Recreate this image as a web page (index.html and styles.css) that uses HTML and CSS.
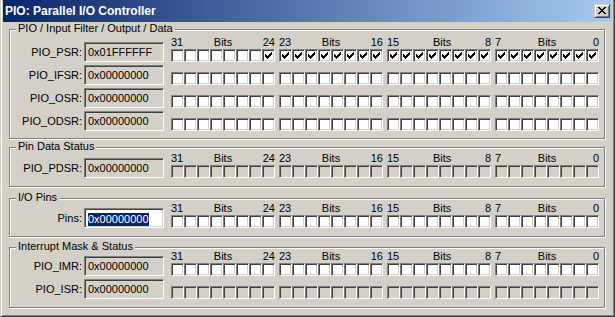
FILE: index.html
```html
<!DOCTYPE html>
<html>
<head>
<meta charset="utf-8">
<title>PIO: Parallel I/O Controller</title>
<link rel="stylesheet" href="styles.css">
</head>
<body>
<div class="window">
  <div class="titlebar">
    <span class="title">PIO: Parallel I/O Controller</span>
    <span class="close"><svg width="8" height="7" viewBox="0 0 8 7" shape-rendering="crispEdges"><path fill="#000" d="M0 0h2v1H0zM6 0h2v1H6zM1 1h2v1H1zM5 1h2v1H5zM2 2h4v1H2zM3 3h2v1H3zM2 4h4v1H2zM1 5h2v1H1zM5 5h2v1H5zM0 6h2v1H0zM6 6h2v1H6z"/></svg></span>
  </div>
  <div class="content">

    <fieldset class="group g1">
      <legend>PIO / Input Filter / Output / Data</legend>
      <div class="rows">
        <div class="row">
          <span class="label">PIO_PSR:</span><span class="field">0x01FFFFFF</span>
          <div class="bits">
            <div class="byte"><div class="hdr"><span>31</span><span>Bits</span><span>24</span></div>
              <div class="boxes"><span class="cb"></span><span class="cb"></span><span class="cb"></span><span class="cb"></span><span class="cb"></span><span class="cb"></span><span class="cb"></span><span class="cb on"></span></div></div>
            <div class="byte"><div class="hdr"><span>23</span><span>Bits</span><span>16</span></div>
              <div class="boxes"><span class="cb on"></span><span class="cb on"></span><span class="cb on"></span><span class="cb on"></span><span class="cb on"></span><span class="cb on"></span><span class="cb on"></span><span class="cb on"></span></div></div>
            <div class="byte"><div class="hdr"><span>15</span><span>Bits</span><span>8</span></div>
              <div class="boxes"><span class="cb on"></span><span class="cb on"></span><span class="cb on"></span><span class="cb on"></span><span class="cb on"></span><span class="cb on"></span><span class="cb on"></span><span class="cb on"></span></div></div>
            <div class="byte"><div class="hdr"><span>7</span><span>Bits</span><span>0</span></div>
              <div class="boxes"><span class="cb on"></span><span class="cb on"></span><span class="cb on"></span><span class="cb on"></span><span class="cb on"></span><span class="cb on"></span><span class="cb on"></span><span class="cb on"></span></div></div>
          </div>
        </div>
        <div class="row">
          <span class="label">PIO_IFSR:</span><span class="field">0x00000000</span>
          <div class="bits">
            <div class="boxes"><span class="cb"></span><span class="cb"></span><span class="cb"></span><span class="cb"></span><span class="cb"></span><span class="cb"></span><span class="cb"></span><span class="cb"></span></div>
            <div class="boxes"><span class="cb"></span><span class="cb"></span><span class="cb"></span><span class="cb"></span><span class="cb"></span><span class="cb"></span><span class="cb"></span><span class="cb"></span></div>
            <div class="boxes"><span class="cb"></span><span class="cb"></span><span class="cb"></span><span class="cb"></span><span class="cb"></span><span class="cb"></span><span class="cb"></span><span class="cb"></span></div>
            <div class="boxes"><span class="cb"></span><span class="cb"></span><span class="cb"></span><span class="cb"></span><span class="cb"></span><span class="cb"></span><span class="cb"></span><span class="cb"></span></div>
          </div>
        </div>
        <div class="row">
          <span class="label">PIO_OSR:</span><span class="field">0x00000000</span>
          <div class="bits">
            <div class="boxes"><span class="cb"></span><span class="cb"></span><span class="cb"></span><span class="cb"></span><span class="cb"></span><span class="cb"></span><span class="cb"></span><span class="cb"></span></div>
            <div class="boxes"><span class="cb"></span><span class="cb"></span><span class="cb"></span><span class="cb"></span><span class="cb"></span><span class="cb"></span><span class="cb"></span><span class="cb"></span></div>
            <div class="boxes"><span class="cb"></span><span class="cb"></span><span class="cb"></span><span class="cb"></span><span class="cb"></span><span class="cb"></span><span class="cb"></span><span class="cb"></span></div>
            <div class="boxes"><span class="cb"></span><span class="cb"></span><span class="cb"></span><span class="cb"></span><span class="cb"></span><span class="cb"></span><span class="cb"></span><span class="cb"></span></div>
          </div>
        </div>
        <div class="row">
          <span class="label">PIO_ODSR:</span><span class="field">0x00000000</span>
          <div class="bits">
            <div class="boxes"><span class="cb"></span><span class="cb"></span><span class="cb"></span><span class="cb"></span><span class="cb"></span><span class="cb"></span><span class="cb"></span><span class="cb"></span></div>
            <div class="boxes"><span class="cb"></span><span class="cb"></span><span class="cb"></span><span class="cb"></span><span class="cb"></span><span class="cb"></span><span class="cb"></span><span class="cb"></span></div>
            <div class="boxes"><span class="cb"></span><span class="cb"></span><span class="cb"></span><span class="cb"></span><span class="cb"></span><span class="cb"></span><span class="cb"></span><span class="cb"></span></div>
            <div class="boxes"><span class="cb"></span><span class="cb"></span><span class="cb"></span><span class="cb"></span><span class="cb"></span><span class="cb"></span><span class="cb"></span><span class="cb"></span></div>
          </div>
        </div>
      </div>
    </fieldset>

    <fieldset class="group g2">
      <legend>Pin Data Status</legend>
      <div class="rows">
        <div class="row off">
          <span class="label">PIO_PDSR:</span><span class="field">0x00000000</span>
          <div class="bits">
            <div class="byte"><div class="hdr"><span>31</span><span>Bits</span><span>24</span></div>
              <div class="boxes"><span class="cb"></span><span class="cb"></span><span class="cb"></span><span class="cb"></span><span class="cb"></span><span class="cb"></span><span class="cb"></span><span class="cb"></span></div></div>
            <div class="byte"><div class="hdr"><span>23</span><span>Bits</span><span>16</span></div>
              <div class="boxes"><span class="cb"></span><span class="cb"></span><span class="cb"></span><span class="cb"></span><span class="cb"></span><span class="cb"></span><span class="cb"></span><span class="cb"></span></div></div>
            <div class="byte"><div class="hdr"><span>15</span><span>Bits</span><span>8</span></div>
              <div class="boxes"><span class="cb"></span><span class="cb"></span><span class="cb"></span><span class="cb"></span><span class="cb"></span><span class="cb"></span><span class="cb"></span><span class="cb"></span></div></div>
            <div class="byte"><div class="hdr"><span>7</span><span>Bits</span><span>0</span></div>
              <div class="boxes"><span class="cb"></span><span class="cb"></span><span class="cb"></span><span class="cb"></span><span class="cb"></span><span class="cb"></span><span class="cb"></span><span class="cb"></span></div></div>
          </div>
        </div>
      </div>
    </fieldset>

    <fieldset class="group g3">
      <legend>I/O Pins</legend>
      <div class="rows">
        <div class="row">
          <span class="label">Pins:</span><span class="field edit"><span class="sel">0x00000000</span></span>
          <div class="bits">
            <div class="byte"><div class="hdr"><span>31</span><span>Bits</span><span>24</span></div>
              <div class="boxes"><span class="cb"></span><span class="cb"></span><span class="cb"></span><span class="cb"></span><span class="cb"></span><span class="cb"></span><span class="cb"></span><span class="cb"></span></div></div>
            <div class="byte"><div class="hdr"><span>23</span><span>Bits</span><span>16</span></div>
              <div class="boxes"><span class="cb"></span><span class="cb"></span><span class="cb"></span><span class="cb"></span><span class="cb"></span><span class="cb"></span><span class="cb"></span><span class="cb"></span></div></div>
            <div class="byte"><div class="hdr"><span>15</span><span>Bits</span><span>8</span></div>
              <div class="boxes"><span class="cb"></span><span class="cb"></span><span class="cb"></span><span class="cb"></span><span class="cb"></span><span class="cb"></span><span class="cb"></span><span class="cb"></span></div></div>
            <div class="byte"><div class="hdr"><span>7</span><span>Bits</span><span>0</span></div>
              <div class="boxes"><span class="cb"></span><span class="cb"></span><span class="cb"></span><span class="cb"></span><span class="cb"></span><span class="cb"></span><span class="cb"></span><span class="cb"></span></div></div>
          </div>
        </div>
      </div>
    </fieldset>

    <fieldset class="group g4">
      <legend>Interrupt Mask &amp; Status</legend>
      <div class="rows">
        <div class="row">
          <span class="label">PIO_IMR:</span><span class="field">0x00000000</span>
          <div class="bits">
            <div class="byte"><div class="hdr"><span>31</span><span>Bits</span><span>24</span></div>
              <div class="boxes"><span class="cb"></span><span class="cb"></span><span class="cb"></span><span class="cb"></span><span class="cb"></span><span class="cb"></span><span class="cb"></span><span class="cb"></span></div></div>
            <div class="byte"><div class="hdr"><span>23</span><span>Bits</span><span>16</span></div>
              <div class="boxes"><span class="cb"></span><span class="cb"></span><span class="cb"></span><span class="cb"></span><span class="cb"></span><span class="cb"></span><span class="cb"></span><span class="cb"></span></div></div>
            <div class="byte"><div class="hdr"><span>15</span><span>Bits</span><span>8</span></div>
              <div class="boxes"><span class="cb"></span><span class="cb"></span><span class="cb"></span><span class="cb"></span><span class="cb"></span><span class="cb"></span><span class="cb"></span><span class="cb"></span></div></div>
            <div class="byte"><div class="hdr"><span>7</span><span>Bits</span><span>0</span></div>
              <div class="boxes"><span class="cb"></span><span class="cb"></span><span class="cb"></span><span class="cb"></span><span class="cb"></span><span class="cb"></span><span class="cb"></span><span class="cb"></span></div></div>
          </div>
        </div>
        <div class="row off">
          <span class="label">PIO_ISR:</span><span class="field">0x00000000</span>
          <div class="bits">
            <div class="boxes"><span class="cb"></span><span class="cb"></span><span class="cb"></span><span class="cb"></span><span class="cb"></span><span class="cb"></span><span class="cb"></span><span class="cb"></span></div>
            <div class="boxes"><span class="cb"></span><span class="cb"></span><span class="cb"></span><span class="cb"></span><span class="cb"></span><span class="cb"></span><span class="cb"></span><span class="cb"></span></div>
            <div class="boxes"><span class="cb"></span><span class="cb"></span><span class="cb"></span><span class="cb"></span><span class="cb"></span><span class="cb"></span><span class="cb"></span><span class="cb"></span></div>
            <div class="boxes"><span class="cb"></span><span class="cb"></span><span class="cb"></span><span class="cb"></span><span class="cb"></span><span class="cb"></span><span class="cb"></span><span class="cb"></span></div>
          </div>
        </div>
      </div>
    </fieldset>

  </div>
</div>
</body>
</html>
```
FILE: styles.css
```css
* { box-sizing: border-box; }
html, body { margin: 0; padding: 0; }
body {
  background: #D4D0C8;
  font-family: "Liberation Sans", Arial, sans-serif;
  font-size: 11px;
  color: #000;
}
.window {
  width: 615px;
  height: 317px;
  background: #D4D0C8;
  border-left: 1px solid #D4D0C8;
  border-right: 1px solid #404040;
  border-bottom: 1px solid #404040;
  box-shadow: inset 1px 0 0 #fff, inset -1px -1px 0 #808080;
  padding: 0 2px 2px 2px;
}
.titlebar {
  height: 22px;
  display: flex;
  align-items: center;
  justify-content: space-between;
  padding: 0 2px;
  background: linear-gradient(to right, #0A246A, #A6CAF0);
  color: #fff;
}
.title {
  font-weight: bold;
  font-size: 12px;
  line-height: 14px;
  white-space: nowrap;
}
.close {
  display: block;
  width: 16px;
  height: 14px;
  background: #D4D0C8;
  border: 1px solid;
  border-color: #D4D0C8 #404040 #404040 #D4D0C8;
  box-shadow: inset 1px 1px 0 #fff, inset -1px -1px 0 #808080;
  padding: 2px 0 0 3px;
}
.close svg { display: block; }

.content {
  display: flex;
  flex-direction: column;
  padding: 2px 7px 0 6px;
}
.group {
  margin: 0;
  padding: 0 0 7px 0;
  min-width: 0;
  border: 1px solid #808080;
  box-shadow: inset 1px 1px 0 #fff, 1px 1px 0 #fff;
}
.group legend {
  margin-left: 6px;
  padding: 0 2px 2px;
  line-height: 9px;
  background: #D4D0C8;
  white-space: nowrap;
}
.rows {
  display: flex;
  flex-direction: column;
  gap: 3px;
}
.g1 .rows { margin-top: 1px; }
.g2 { margin-top: 3px; padding-bottom: 8px; }
.g2 .rows { margin-top: -1px; }
.g3 { margin-top: 6px; padding-bottom: 8px; }
.g3 .rows { margin-top: -2px; }
.g4 { margin-top: 5px; padding-bottom: 8px; }
.g4 .rows { margin-top: -3px; }

.row {
  display: flex;
  align-items: flex-end;
}
.label {
  width: 72px;
  margin-right: 2px;
  text-align: right;
  line-height: 20px;
  white-space: nowrap;
}
.field {
  display: block;
  width: 80px;
  height: 20px;
  border: 1px solid;
  border-color: #808080 #fff #fff #808080;
  box-shadow: inset 1px 1px 0 #404040, inset -1px -1px 0 #D4D0C8;
  background: #D4D0C8;
  padding-left: 3px;
  line-height: 18px;
  white-space: nowrap;
}
.field.edit { background: #fff; }
.sel {
  display: inline-block;
  line-height: 13px;
  background: #0A246A;
  color: #fff;
  vertical-align: middle;
}
.bits {
  display: flex;
  gap: 4px;
  margin-left: 7px;
}
.byte {
  display: flex;
  flex-direction: column;
}
.hdr {
  display: flex;
  justify-content: space-between;
  height: 13px;
  line-height: 13px;
}
.boxes { display: flex; }
.cb {
  display: block;
  width: 13px;
  height: 13px;
  padding: 2px;
  border: 1px solid;
  border-color: #808080 #fff #fff #808080;
  box-shadow: inset 1px 1px 0 #404040, inset -1px -1px 0 #D4D0C8;
  background: #fff;
}
.off .cb { background: #D4D0C8; }
.cb.on::after {
  content: "";
  display: block;
  width: 7px;
  height: 7px;
  background: #000;
  clip-path: polygon(0 2px, 1px 2px, 1px 3px, 2px 3px, 2px 4px, 3px 4px, 3px 3px, 4px 3px, 4px 2px, 5px 2px, 5px 1px, 6px 1px, 6px 0, 7px 0, 7px 3px, 6px 3px, 6px 4px, 5px 4px, 5px 5px, 4px 5px, 4px 6px, 3px 6px, 3px 7px, 2px 7px, 2px 6px, 1px 6px, 1px 5px, 0 5px);
}
```
